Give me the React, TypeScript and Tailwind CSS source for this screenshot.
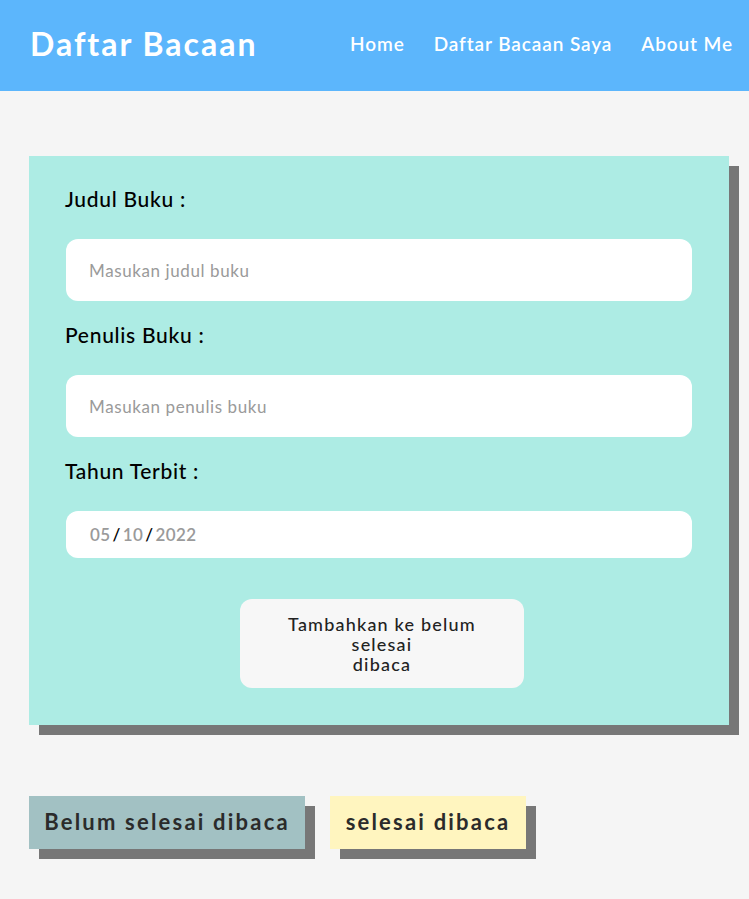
import React from "react";

// Halaman daftar bacaan
export default function App() {
  const font = { fontFamily: "Lato, 'Open Sans', sans-serif" };

  return (
    <div className="min-h-[899px] w-full bg-[#f5f5f5]" style={font}>
      {/* Header */}
      <header className="h-[91px] bg-[#5cb6fc] flex items-center justify-between pl-[30px] pr-[16px] pb-[3px]">
        <h1 className="text-white font-bold text-[32px] tracking-[2px]">Daftar Bacaan</h1>
        <nav className="flex items-center gap-[29px] text-white font-semibold text-[19px] tracking-[0.9px]">
          <a href="#">Home</a>
          <a href="#">Daftar Bacaan Saya</a>
          <a href="#">About Me</a>
        </nav>
      </header>

      <main className="pt-[65px] pl-[29px] pr-[20px]">
        {/* Form */}
        <section className="w-[700px] bg-[#adece4] shadow-[10px_10px_0_#777777] px-[37px] pt-[31px] pb-[37px]">
          <label className="block text-[21px] leading-[24px] font-medium text-black -ml-[1px] tracking-[0.7px]">Judul Buku :</label>
          <input
            placeholder="Masukan judul buku"
            className="mt-[28px] w-full h-[62px] rounded-[12px] bg-white px-[23px] text-[17px] tracking-[0.6px] placeholder:text-[#9a9a9a] outline-none"
          />
          <label className="block mt-[22px] text-[21px] leading-[24px] font-medium text-black -ml-[1px] tracking-[0.7px]">Penulis Buku :</label>
          <input
            placeholder="Masukan penulis buku"
            className="mt-[28px] w-full h-[62px] rounded-[12px] bg-white px-[23px] text-[17px] tracking-[0.6px] placeholder:text-[#9a9a9a] outline-none"
          />
          <label className="block mt-[22px] text-[21px] leading-[24px] font-medium text-black -ml-[1px] tracking-[0.7px]">Tahun Terbit :</label>
          <div className="mt-[28px] w-full h-[47px] rounded-[12px] bg-white px-[24px] flex items-center text-[17px] font-semibold text-[#9a9a9a] tracking-[0.4px]">
            <span>05</span>
            <span className="text-black mx-[2px]">/</span>
            <span>10</span>
            <span className="text-black mx-[2px]">/</span>
            <span>2022</span>
          </div>
          <div className="flex justify-center mt-[41px] pl-[6px]">
            <button className="w-[284px] h-[89px] rounded-[12px] bg-[#f7f7f7] text-[#222] text-[18px] leading-[20px] font-medium tracking-[1.2px]">
              Tambahkan ke belum
              <br />
              selesai
              <br />
              dibaca
            </button>
          </div>
        </section>

        {/* Tab */}
        <div className="mt-[71px] flex gap-[25px]">
          <button className="h-[53px] w-[276px] bg-[#a2c1c3] shadow-[10px_10px_0_#777777] text-[#2b2b2b] font-bold text-[22px] tracking-[2.2px] pb-[2px]">
            Belum selesai dibaca
          </button>
          <button className="h-[53px] w-[196px] bg-[#fff5bf] shadow-[10px_10px_0_#777777] text-[#2b2b2b] font-bold text-[22px] tracking-[2.2px] pb-[2px]">
            selesai dibaca
          </button>
        </div>
      </main>
    </div>
  );
}
